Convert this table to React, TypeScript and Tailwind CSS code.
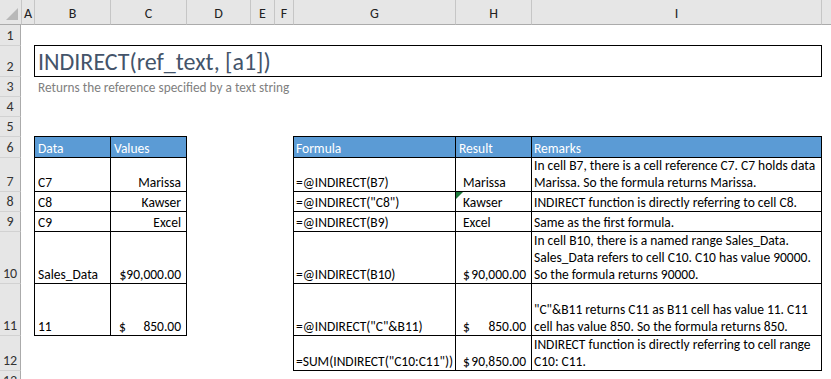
const font = { fontFamily: "Calibri, Carlito, Lato, 'Liberation Sans', sans-serif" };

const colStart: Record<string, string> = {
  B: "col-start-3",
  C: "col-start-4",
  G: "col-start-8",
  H: "col-start-9",
  I: "col-start-10",
};

const rowStart: Record<number, string> = {
  1: "row-start-2",
  2: "row-start-3",
  3: "row-start-4",
  4: "row-start-5",
  5: "row-start-6",
  6: "row-start-7",
  7: "row-start-8",
  8: "row-start-9",
  9: "row-start-10",
  10: "row-start-11",
  11: "row-start-12",
  12: "row-start-13",
  13: "row-start-14",
};

const letters = ["A", "B", "C", "D", "E", "F", "G", "H", "I", ""];

type CellProps = {
  col: string;
  row: number;
  last?: boolean;
  right?: boolean;
  className?: string;
  children?: React.ReactNode;
};

function Cell({ col, row, last, right, className = "", children }: CellProps) {
  return (
    <div
      className={`relative flex flex-col justify-end border-l border-t border-black text-[13.5px] leading-[17px] text-black ${colStart[col]} ${rowStart[row]} ${
        last ? "-mb-px border-b" : ""
      } ${right ? "-mr-px border-r" : ""} ${className}`}
    >
      {children}
    </div>
  );
}

function Money({ value }: { value: string }) {
  return (
    <div className="flex justify-between">
      <span>$</span>
      <span>{value}</span>
    </div>
  );
}

const data = [
  { row: 7, key: "C7", val: "Marissa" },
  { row: 8, key: "C8", val: "Kawser" },
  { row: 9, key: "C9", val: "Excel" },
  { row: 10, key: "Sales_Data", val: "$90,000.00" },
];

const formulas: {
  row: number;
  f: string;
  res: React.ReactNode;
  remarks: string[];
}[] = [
  {
    row: 7,
    f: "=@INDIRECT(B7)",
    res: "Marissa",
    remarks: ["In cell B7, there is a cell reference C7. C7 holds data", "Marissa. So the formula returns Marissa."],
  },
  {
    row: 8,
    f: '=@INDIRECT("C8")',
    res: "Kawser",
    remarks: ["INDIRECT function is directly referring to cell C8."],
  },
  {
    row: 9,
    f: "=@INDIRECT(B9)",
    res: "Excel",
    remarks: ["Same as the first formula."],
  },
  {
    row: 10,
    f: "=@INDIRECT(B10)",
    res: <Money value="90,000.00" />,
    remarks: [
      "In cell B10, there is a named range Sales_Data.",
      "Sales_Data refers to cell C10. C10 has value 90000.",
      "So the formula returns 90000.",
    ],
  },
  {
    row: 11,
    f: '=@INDIRECT("C"&B11)',
    res: <Money value="850.00" />,
    remarks: ['"C"&B11 returns C11 as B11 cell has value 11. C11', "cell has value 850. So the formula returns 850."],
  },
  {
    row: 12,
    f: '=SUM(INDIRECT("C10:C11"))',
    res: <Money value="90,850.00" />,
    remarks: ["INDIRECT function is directly referring to cell range", "C10: C11."],
  },
];

export default function App() {
  return (
    <div
      className="grid h-[379px] w-[831px] grid-cols-[21px_13px_76px_76px_64px_24px_19px_162px_76px_290px_1fr] grid-rows-[25px_20px_31px_20px_20px_20px_21px_34px_20px_20px_52px_52px_35px_20px] overflow-hidden bg-white"
      style={font}
    >
      {/* column headers */}
      <div className="flex items-end justify-end border-b border-[#ababab] bg-[#e6e6e6] pb-[4px] pr-[3px]">
        <svg width="12" height="12" viewBox="0 0 12 12">
          <polygon points="12,0 12,12 0,12" fill="#b8b8b8" />
        </svg>
      </div>
      {letters.map((l, i) => (
        <div
          key={i}
          className="flex items-center justify-center border-b border-l border-[#ababab] border-l-[#c6c6c6] bg-[#e6e6e6] pt-[3px] text-[14px] text-[#222]"
        >
          {l}
        </div>
      ))}

      {/* row headers */}
      {Array.from({ length: 13 }, (_, i) => i + 1).map((n) => (
        <div
          key={n}
          className={`col-start-1 ${rowStart[n]} flex items-end justify-center border-r border-[#ababab] bg-[#e6e6e6] text-[14px] leading-[18px] text-[#333] ${
            n > 1 ? "border-t border-t-[#d2d2d2]" : ""
          }`}
        >
          {n}
        </div>
      ))}

      {/* title */}
      <div className="col-span-8 col-start-3 row-start-3 -mb-px -mr-px flex items-center border border-black pl-[3px] pt-[1px] text-[24px] font-light text-[#44546a]">
        INDIRECT(ref_text, [a1])
      </div>
      <div className="col-span-8 col-start-3 row-start-4 flex items-end pl-[4px] text-[13.3px] leading-[17px] text-[#7f7f7f]">
        Returns the reference specified by a text string
      </div>

      {/* data table */}
      <Cell col="B" row={6} className="bg-[#5b9bd5] pl-[3px] text-white">
        Data
      </Cell>
      <Cell col="C" row={6} right className="bg-[#5b9bd5] pl-[3px] text-white">
        Values
      </Cell>
      {data.map((d) => (
        <div key={d.row} className="contents">
          <Cell col="B" row={d.row} className="pl-[3px]">
            {d.key}
          </Cell>
          <Cell col="C" row={d.row} right className="items-end pr-[5px]">
            {d.val}
          </Cell>
        </div>
      ))}
      <Cell col="B" row={11} last className="pl-[3px]">
        11
      </Cell>
      <Cell col="C" row={11} last right className="pl-[8px] pr-[5px]">
        <Money value="850.00" />
      </Cell>

      {/* formula table */}
      <Cell col="G" row={6} className="bg-[#5b9bd5] pl-[2px] text-white">
        Formula
      </Cell>
      <Cell col="H" row={6} className="bg-[#5b9bd5] pl-[3px] text-white">
        Result
      </Cell>
      <Cell col="I" row={6} right className="bg-[#5b9bd5] pl-[2px] text-white">
        Remarks
      </Cell>
      {formulas.map((f) => (
        <div key={f.row} className="contents">
          <Cell col="G" row={f.row} last={f.row === 12} className="pl-[2px]">
            {f.f}
          </Cell>
          <Cell col="H" row={f.row} last={f.row === 12} className="pl-[7px] pr-[5px]">
            {f.row === 8 && (
              <svg className="absolute left-0 top-0" width="7" height="7" viewBox="0 0 7 7">
                <polygon points="0,0 7,0 0,7" fill="#1e7a3c" />
              </svg>
            )}
            {f.res}
          </Cell>
          <Cell col="I" row={f.row} last={f.row === 12} right className="pl-[2px]">
            {f.remarks.map((r, i) => (
              <div key={i} className="whitespace-nowrap">
                {r}
              </div>
            ))}
          </Cell>
        </div>
      ))}
    </div>
  );
}
